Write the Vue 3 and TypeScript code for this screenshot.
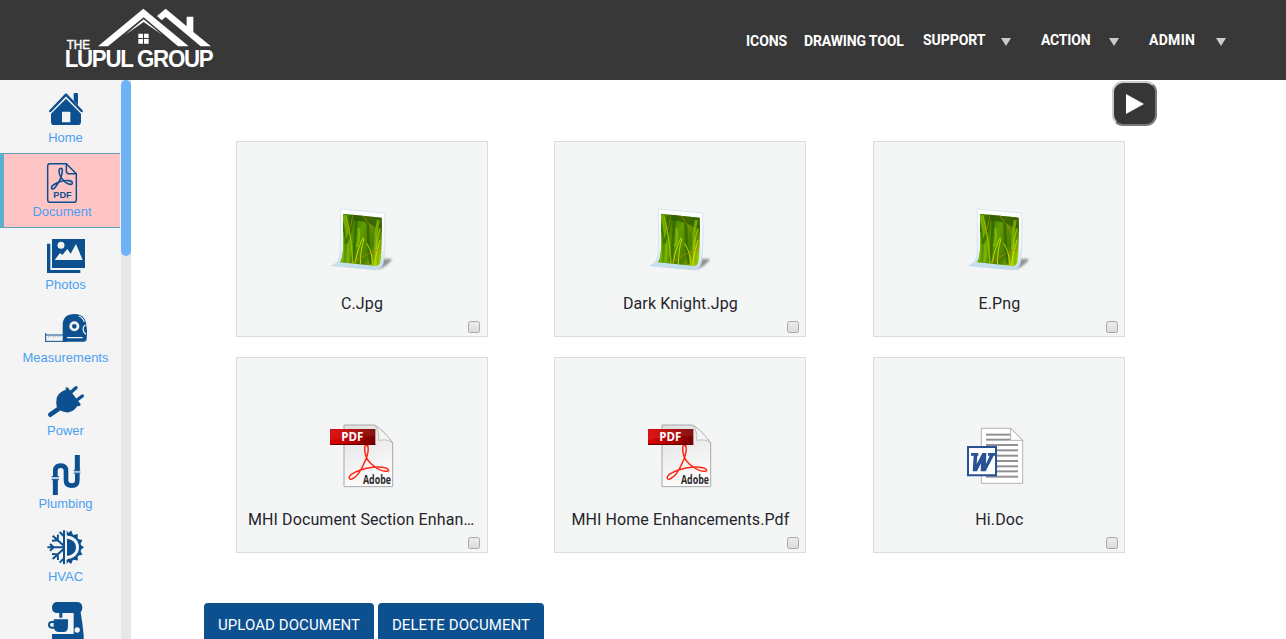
<script setup lang="ts">
interface NavEntry { label: string; menu: boolean; cls: string }
interface SideEntry { label: string; icon: string; box: string; active?: boolean }
interface DocFile { name: string; kind: 'image' | 'pdf' | 'word' }

const nav: NavEntry[] = [
  { label: 'ICONS', menu: false, cls: 'n-icons' },
  { label: 'DRAWING TOOL', menu: false, cls: 'n-draw' },
  { label: 'SUPPORT', menu: true, cls: 'n-support' },
  { label: 'ACTION', menu: true, cls: 'n-action' },
  { label: 'ADMIN', menu: true, cls: 'n-admin' },
]

const sections: SideEntry[] = [
  { label: 'Home', icon: 'home', box: '129 27 135 120' },
  { label: 'Document', icon: 'document', box: '120 249 132 120', active: true },
  { label: 'Photos', icon: 'photos', box: '129 24 135 120' },
  { label: 'Measurements', icon: 'measure', box: '129 243 135 120' },
  { label: 'Power', icon: 'power', box: '129 27 135 120' },
  { label: 'Plumbing', icon: 'plumbing', box: '129 246 135 120' },
  { label: 'HVAC', icon: 'hvac', box: '129 54 135 120' },
  { label: '', icon: 'appliance', box: '129 273 135 120' },
]

const files: DocFile[] = [
  { name: 'C.Jpg', kind: 'image' },
  { name: 'Dark Knight.Jpg', kind: 'image' },
  { name: 'E.Png', kind: 'image' },
  { name: 'MHI Document Section Enhancements.Pdf', kind: 'pdf' },
  { name: 'MHI Home Enhancements.Pdf', kind: 'pdf' },
  { name: 'Hi.Doc', kind: 'word' },
]
const rays: number[] = [-75, -50, -25, 0, 25, 50, 75]
const docLines: number[] = [72, 87, 103, 119, 135, 151, 167, 182, 198]
</script>

<template>
  <div class="page">
    <header class="topbar">
      <svg class="logo" viewBox="0 0 540 240" fill="#fff">
        <path d="M144 139 L280 26 L416 139 H384 L281 52 L174 139 Z" />
        <path d="M226 104 L281 58 L336 104 L281 66 Z" />
        <path d="M321 48 L347 26 L410 79 V50 H430 V96 L483 139 H452 L347 51 L335 61 Z" />
        <path d="M265 101h14v13h-14z M282 101h14v13h-14z M265 117h14v14h-14z M282 117h14v14h-14z" />
        <text x="50" y="146" font-size="40" textLength="70" lengthAdjust="spacingAndGlyphs" stroke="#fff" stroke-width="1.500">THE</text>
        <text class="brand" x="44" y="200" font-size="69" textLength="443" lengthAdjust="spacingAndGlyphs">LUPUL GROUP</text>
      </svg>
      <nav class="nav">
        <a v-for="n in nav" :key="n.label" class="nav-item" :class="n.cls">
          <span class="nav-text">{{ n.label }}</span>
          <svg v-if="n.menu" class="caret" viewBox="0 0 10 8"><path d="M0 0H10L5 8Z" fill="#ccc" /></svg>
        </a>
      </nav>
    </header>

    <div class="body">
      <aside class="sidebar">
        <ul class="side-list">
          <li v-for="s in sections" :key="s.icon" class="side-item" :class="{ active: s.active }">
            <svg class="side-icon" :class="{ narrow: s.active }" :viewBox="s.box">
              <template v-if="s.icon === 'home'">
                <path d="M151 93 L198 44 L245 93" fill="none" stroke="#0d5090" stroke-width="7.500" stroke-linejoin="round" stroke-linecap="round" />
                <path d="M221 62V42q0-3 3-3h7q3 0 3 3v34z M198 56L243 101V125q0 10-10 10H163q-10 0-10-10V101z" fill="#0d5090" />
                <rect x="186" y="95" width="25" height="32" rx="2" fill="#f4f4f4" />
              </template>
              <g v-else-if="s.icon === 'document'" fill="none" stroke="#0d5090" stroke-width="4.500" stroke-linejoin="round">
                <path d="M149 251H199L229 281V360Q229 367 222 367H150Q143 367 143 360V258Q143 251 149 251Z" />
                <path d="M199 251V273Q199 281 207 281H229" />
                <path d="M155 325C151 317 169 309 184 304C199 300 216 301 217 308C218 316 206 314 197 307C183 295 176 282 177 271C178 263 187 263 187 271C187 288 178 306 166 322C162 327 157 329 155 325Z" stroke-width="4.800" />
                <text x="160" y="354" font-size="28" font-weight="bold" textLength="55" lengthAdjust="spacingAndGlyphs" fill="#0d5090" stroke="none">PDF</text>
              </g>
              <template v-else-if="s.icon === 'photos'">
                <path d="M141 47h10v79h90v9H141z M156 33h99v87H156z" fill="#0d5090" />
                <circle cx="183" cy="52" r="10.5" fill="#f4f4f4" />
                <path d="M164 96L180 75L187 81L202 63L212 77L228 48L248 96Z" fill="#f4f4f4" />
              </template>
              <template v-else-if="s.icon === 'measure'">
                <path d="M188 341V292Q188 258 224 258Q252 258 258 284Q263 306 260 333Q259 341 251 341Z" fill="#0d5090" />
                <circle cx="223" cy="295" r="11" fill="none" stroke="#f4f4f4" stroke-width="8" />
                <path d="M236 264Q248 268 253 281M257 291Q247 296 250 307Q251 315 258 319M201 329H248" fill="none" stroke="#f4f4f4" stroke-width="3.5" />
                <path d="M137 315V342M137 321H189M137 340H200" fill="none" stroke="#0d5090" stroke-width="3" />
                <path d="M146 323v6m7-6v4m7-4v6m7-6v4m7-4v6m7-6v4" stroke="#78a0c4" stroke-width="2" />
              </template>
              <template v-else-if="s.icon === 'power'">
                <path d="M151 125L178 106" fill="none" stroke="#0d5090" stroke-width="14" stroke-linecap="round" />
                <path d="M211 59L228 44M231 81L247 69" fill="none" stroke="#0d5090" stroke-width="10" stroke-linecap="round" />
                <path d="M196 44L203 43L242 94L240 99L232 99Q224 113 207 118Q191 119 180 112L171 105Q167 88 170 74Q177 56 198 50Z" fill="#0d5090" />
              </template>
              <g v-else-if="s.icon === 'plumbing'" fill="none" stroke="#0d5090">
                <path d="M166 366V320M232 246V292" stroke-width="15" />
                <path d="M166 312V294Q166 278 182 278Q198 278 198 294V321Q198 338 216 338Q232 338 232 321V301" stroke-width="14" />
                <path d="M155 311H177M155 320H177M221 292H241M221 300H241" stroke-width="3" />
                <path d="M156 315.500H176M222 296H240" stroke="#a5bfd7" stroke-width="4" />
              </g>
              <g v-else-if="s.icon === 'hvac'" fill="none" stroke="#0d5090">
                <path d="M192 61V163" stroke-width="6" />
                <path d="M142 112H190M158 77L190 106M158 147L190 118M150 102L161 112L150 122M156 92L173 91L174 74M156 132L173 133L174 150M179 66L191 78M179 158L191 146" stroke-width="6" />
                <path d="M202 74A38 38 0 0 1 202 150" stroke-width="6" />
                <g v-for="r in rays" :key="r" :transform="`rotate(${r} 200 112)`"><path d="M238 101L252 112L238 123Z" fill="#0d5090" stroke="none" /></g>
                <path d="M200 61L208 74H200ZM200 163L208 150H200ZM201 86Q228 90 228 112Q228 134 201 138Z" fill="#0d5090" stroke="none" />
              </g>
              <template v-else>
                <path d="M173 276H230Q247 276 247 293Q247 301 242 307L247 340L251 375V387H156V372H221V309H173Q156 309 156 293Q156 276 173 276Z" fill="#0d5090" />
                <path d="M178 308h9v15h-9zM161 328H204V347Q204 366 191 366H177Q163 366 161 352Z" fill="#0d5090" />
                <path d="M163 336H155Q147 336 147 345Q147 353 157 353H163" fill="none" stroke="#0d5090" stroke-width="6" />
                <circle cx="231.500" cy="360" r="8" fill="#f4f4f4" />
              </template>
            </svg>
            <span v-if="s.label" class="side-label">{{ s.label }}</span>
          </li>
        </ul>
        <div class="track"><div class="thumb"></div></div>
      </aside>

      <main class="content">
        <div class="play-row">
          <button class="play" aria-label="Play"><svg viewBox="0 0 18 20"><path d="M0 0L18 10L0 20Z" fill="#fff" /></svg></button>
        </div>
        <section class="grid">
          <article v-for="f in files" :key="f.name" class="card">
            <svg v-if="f.kind === 'image'" class="thumb-icon" viewBox="60 39 192 192">
              <defs>
                <linearGradient id="paper" x1="0" y1="0" x2="0" y2="1"><stop offset="0" stop-color="#fff" /><stop offset=".65" stop-color="#edf4fb" /><stop offset="1" stop-color="#b9d9ea" /></linearGradient>
                <linearGradient id="grass" x1="0" y1="0" x2="1" y2="0.7"><stop offset="0" stop-color="#5f9700" /><stop offset=".25" stop-color="#397400" /><stop offset=".5" stop-color="#629c00" /><stop offset=".8" stop-color="#4a7f00" /><stop offset="1" stop-color="#a5c800" /></linearGradient>
                <clipPath id="pic"><path d="M99 56L215 68Q217 130 213 188Q211 210 199 213L90 202Q99 188 99 160Z" /></clipPath>
                <filter id="soft" x="-30%" y="-30%" width="160%" height="160%"><feGaussianBlur stdDeviation="2.500" /></filter>
                <filter id="blades" x="-10%" y="-10%" width="120%" height="120%"><feGaussianBlur stdDeviation="1.800" /></filter>
              </defs>
              <path d="M212 192L240 191Q250 193 239 202Q223 220 202 223Z" fill="#707478" opacity=".75" filter="url(#soft)" />
              <path d="M91 42L224 54Q227 132 222 190Q219 224 197 225L65 212Q91 204 91 164Z" fill="url(#paper)" stroke="#c9d8ec" stroke-width="2" />
              <g clip-path="url(#pic)" fill="none">
                <path d="M85 45H220V220H85Z" fill="url(#grass)" />
                <g filter="url(#blades)">
                  <path d="M125 50Q170 56 225 62V118Q190 80 130 76Z" fill="#2c5400" opacity=".7" />
                  <path d="M99 60Q120 120 113 205M205 75Q188 150 207 212" stroke="#83b808" stroke-width="9" opacity=".8" />
                  <path d="M126 60Q124 110 108 145M140 58Q137 120 129 198M174 78Q172 143 183 208" stroke="#2c6200" stroke-width="9" opacity=".7" />
                  <path d="M107 60Q126 130 129 212M211 100Q193 150 199 210" stroke="#a9d600" stroke-width="4" opacity=".75" />
                  <path d="M97 110Q103 160 96 203M145 100Q151 136 140 155" stroke="#77b900" stroke-width="7" />
                </g>
                <path d="M160 127Q145 153 135 205M162 131Q151 165 151 212M187 208Q188 173 170 145M210 135Q197 181 193 213" stroke="#d2e600" stroke-width="3" opacity=".85" />
                <path d="M157 60Q181 88 196 120M128 61Q125 94 114 119M133 202Q170 175 214 160" stroke="#b08a00" stroke-width="2.500" opacity=".9" />
              </g>
            </svg>

            <svg v-else-if="f.kind === 'pdf'" class="thumb-icon" viewBox="60 42 192 192">
              <defs>
                <linearGradient id="sheet" x1="0" y1="0" x2="0.300" y2="1"><stop offset="0" stop-color="#dfdfdf" /><stop offset="1" stop-color="#fcfcfc" /></linearGradient>
                <linearGradient id="band"><stop offset="0" stop-color="#dc0000" /><stop offset=".35" stop-color="#c00000" /><stop offset="1" stop-color="#760000" /></linearGradient>
              </defs>
              <path d="M102 45H193Q215 55 248 98V230H102Z" fill="url(#sheet)" stroke="#a8a8a8" stroke-width="3" />
              <path d="M195 46Q209 64 206 91Q232 86 247 98Q225 65 195 46Z" fill="#f4f4f4" stroke="#aaa" stroke-width="2" />
              <path d="M174 111Q166 100 164 112C163 130 169 149 184 162C203 178 222 187 234 183C242 176 217 168 188 172C164 174 136 184 124 193C113 202 117 210 126 207C143 200 157 174 165 154C174 135 177 119 173 105" fill="none" stroke="#ff2514" stroke-width="4.500" />
              <circle cx="236" cy="184" r="3" fill="none" stroke="#ff6254" />
              <path d="M60 57H196V105H60Z" fill="url(#band)" />
              <path d="M61 58H195V79Q120 77 61 91Z" fill="#fff" opacity=".08" />
              <path d="M60 103.500H196" stroke="#650000" stroke-width="3" />
              <text class="pdf-tag" x="94" y="94" font-size="36" textLength="66" lengthAdjust="spacingAndGlyphs" fill="#fff">PDF</text>
              <text class="pdf-tag" x="159" y="221" font-size="36" textLength="84" lengthAdjust="spacingAndGlyphs" fill="#292929">Adobe</text>
            </svg>

            <svg v-else class="thumb-icon" viewBox="81 42 192 192">
              <path d="M124 55H212L248 91V220H124Z" fill="#fff" stroke="#a3a3a3" stroke-width="2.500" />
              <path v-for="y in docLines" :key="y" :d="`M138 ${y + 2}H${y < 90 ? 211 : 234}`" stroke="#919191" stroke-width="6" />
              <path d="M212 55V91H248Z" fill="#fff" stroke="#a3a3a3" stroke-width="2.500" />
              <path d="M84 111H168V196H84Z" fill="#fff" stroke="#285293" stroke-width="6" />
              <path d="M93 129H115V137H112L110 162L127 129H139L138 162L149 137H144V129H166V137H161L137 184H122L123 160L111 184H98L101 137H93Z" fill="#285293" />
            </svg>
            <h3 class="name">{{ f.name }}</h3>
            <input class="check" type="checkbox" :aria-label="f.name" />
          </article>
        </section>
        <div class="actions">
          <button class="btn upload">UPLOAD DOCUMENT</button>
          <button class="btn delete">DELETE DOCUMENT</button>
        </div>
      </main>
    </div>
  </div>
</template>

<style>
html, body { overflow: hidden; background: #fff; }
</style>

<style scoped>
* { box-sizing: border-box; }
.page { height: 639px; overflow: hidden; font-family: Roboto, sans-serif; }
.topbar { height: 80px; background: #383838; padding: 0 60px 0 50px; display: flex; justify-content: space-between; }
.logo { width: 180px; height: 80px; font-family: "Liberation Sans", Arial, sans-serif; }
.brand { font-weight: 700; letter-spacing: -4px; }
.nav { display: flex; align-items: flex-start; padding-top: 30px; }
.nav-item { display: flex; align-items: center; justify-content: space-between; height: 20px; color: #fff; font-size: 14px; line-height: 20px; font-weight: 700; letter-spacing: -0.05px; white-space: nowrap; }
.n-icons { width: 58px; margin-top: 1px; }
.n-draw { width: 119px; margin-top: 1px; letter-spacing: -0.15px; }
.n-support { width: 88px; margin-right: 30px; }
.n-action { width: 78px; margin-right: 30px; letter-spacing: -0.2px; }
.n-admin { width: 77px; letter-spacing: 0.3px; }
.caret { width: 10px; height: 8px; margin-top: 3px; }
.body { display: flex; height: 559px; }
.sidebar { width: 131px; height: 559px; display: flex; background: #f4f4f4; overflow: hidden; }
.side-list { width: 121px; margin: 0; padding: 0; list-style: none; }
.side-item { height: 73px; width: 131px; padding-top: 9px; display: flex; flex-direction: column; align-items: center; font-family: "Liberation Sans", Arial, sans-serif; }
.side-item.active { width: 120px; height: 75px; margin-bottom: -1px; background: #ffc5c5; border-left: 4px solid #5bb0cf; border-top: 1px solid #619fbd; border-bottom: 1px solid #619fbd; }
.side-icon { width: 45px; height: 40px; flex: none; }
.side-icon.narrow { width: 44px; }
.side-label { font-size: 13px; line-height: 16px; color: #4b9ff2; margin-top: 1px; }
.track { width: 10px; height: 559px; background: #e7e7e7; z-index: 1; }
.thumb { height: 176px; border-radius: 5px; background: #70b2f6; }
.content { flex: 1; }
.play-row { height: 61px; padding: 1px 129px 0 0; display: flex; justify-content: flex-end; }
.play { width: 45px; height: 45px; padding: 0 0 0 1px; border: 2px outset #c9cbcd; border-radius: 11px; background: #363636; display: flex; align-items: center; justify-content: center; }
.play svg { width: 18px; height: 20px; }
.grid { margin-left: 105px; display: grid; grid-template-columns: 318.4px 319px 252px; row-gap: 20px; }
.card { width: 252px; height: 196px; border: 1px solid #dcdcdc; background: #f4f6f6; padding-top: 66px; display: flex; flex-direction: column; align-items: center; }
.thumb-icon { width: 64px; height: 64px; flex: none; }
.name { width: 228px; margin: 20px 0 0; text-align: center; font-size: 16px; line-height: 24px; height: 24px; font-weight: 400; letter-spacing: 0.1px; color: #24242a; overflow: hidden; white-space: nowrap; text-overflow: ellipsis; }
.check { appearance: none; width: 12px; height: 12px; margin: 5px 6.9px 0 0; align-self: flex-end; border: 1px solid #a8a8a8; border-radius: 2.5px; background: linear-gradient(#ececec, #dcdcdc); flex: none; }
.actions { display: flex; gap: 4px; padding: 50px 0 0 73px; }
.btn { height: 44px; border: 0; border-radius: 4px; background: #0d5090; color: #fff; font-family: Roboto, sans-serif; font-size: 15px; line-height: 44px; letter-spacing: 0.08px; padding: 0; white-space: nowrap; }
.upload { width: 170px; }
.delete { width: 166px; }
.pdf-tag { font-family: "Open Sans", sans-serif; font-weight: 700; }
</style>
